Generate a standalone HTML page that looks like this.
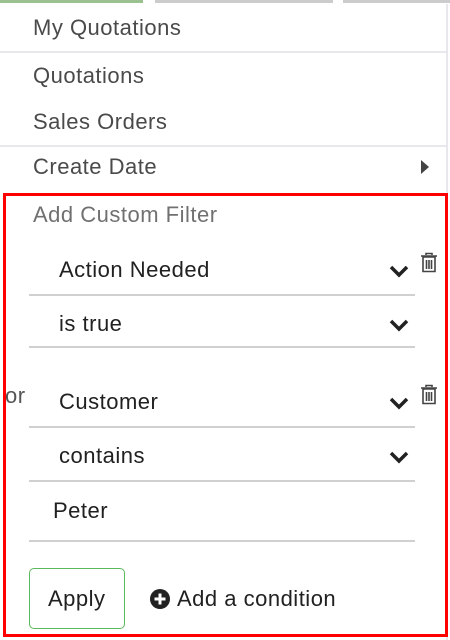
<!DOCTYPE html>
<html><head><style>
body{margin:0;width:450px;height:640px;background:#fff;position:relative;overflow:hidden;font-family:"Liberation Sans",sans-serif;}
.a{position:absolute}
.t{position:absolute;font-size:22px;letter-spacing:0.5px;color:#4a4a4a;line-height:24px;white-space:nowrap}
.d{position:absolute;font-size:22px;letter-spacing:0.5px;color:#212121;line-height:24px;white-space:nowrap}
.hl{position:absolute;height:2px;background:#e8e8ec}
.ul{position:absolute;left:29px;width:386px;height:2px;background:#d0d0d0}
</style></head><body>
<div class="a" style="left:0;top:0;width:143px;height:3px;background:#9ac18f"></div>
<div class="a" style="left:155px;top:0;width:178px;height:3px;background:#ccc"></div>
<div class="a" style="left:343px;top:0;width:107px;height:3px;background:#ccc"></div>
<div class="a" style="left:0;top:4px;width:446px;height:636px;border-right:2px solid #e8e8ec"></div>
<div class="t" style="left:33px;top:16px">My Quotations</div>
<div class="hl" style="left:0;top:51px;width:446px"></div>
<div class="t" style="left:33px;top:64px">Quotations</div>
<div class="t" style="left:33px;top:110px">Sales Orders</div>
<div class="hl" style="left:0;top:145px;width:446px"></div>
<div class="t" style="left:33px;top:155px">Create Date</div>
<svg class="a" style="left:420px;top:159px" width="10" height="16"><path d="M1 1L9 8L1 15Z" fill="#444"/></svg>
<div class="a" style="left:3px;top:193px;width:439px;height:438px;border:3px solid #f00"></div>
<div class="t" style="left:33px;top:203px;color:#707070">Add Custom Filter</div>
<div class="d" style="left:59px;top:258px">Action Needed</div>
<div class="ul" style="top:294px"></div>
<div class="d" style="left:59px;top:312px">is true</div>
<div class="ul" style="top:346px"></div>
<div class="t" style="left:5px;top:384px;color:#555">or</div>
<div class="d" style="left:59px;top:390px">Customer</div>
<div class="ul" style="top:426px"></div>
<div class="d" style="left:59px;top:444px">contains</div>
<div class="ul" style="top:480px"></div>
<div class="d" style="left:53px;top:499px">Peter</div>
<div class="ul" style="top:540px"></div>
<svg class="a" style="left:388px;top:264px" width="22" height="14"><path d="M3 3L11 11L19 3" stroke="#222" stroke-width="3.5" fill="none"/></svg>
<svg class="a" style="left:388px;top:318px" width="22" height="14"><path d="M3 3L11 11L19 3" stroke="#222" stroke-width="3.5" fill="none"/></svg>
<svg class="a" style="left:388px;top:396px" width="22" height="14"><path d="M3 3L11 11L19 3" stroke="#222" stroke-width="3.5" fill="none"/></svg>
<svg class="a" style="left:388px;top:450px" width="22" height="14"><path d="M3 3L11 11L19 3" stroke="#222" stroke-width="3.5" fill="none"/></svg>
<svg class="a" style="left:419px;top:252px" width="20" height="22"><path d="M7 3V1.5H13V3M2 4H18M4 5H16V19.5H4Z M7.5 8V17M10 8V17M12.5 8V17" stroke="#444" stroke-width="1.6" fill="none"/></svg>
<svg class="a" style="left:419px;top:384px" width="20" height="22"><path d="M7 3V1.5H13V3M2 4H18M4 5H16V19.5H4Z M7.5 8V17M10 8V17M12.5 8V17" stroke="#444" stroke-width="1.6" fill="none"/></svg>
<div class="a" style="left:29px;top:568px;width:96px;height:61px;border:1.5px solid #5cb85c;border-radius:5px;box-sizing:border-box"></div>
<div class="d" style="left:48px;top:587px">Apply</div>
<svg class="a" style="left:149px;top:588px" width="22" height="22"><circle cx="11" cy="11" r="10" fill="#222"/><path d="M11 5.5V16.5M5.5 11H16.5" stroke="#fff" stroke-width="3"/></svg>
<div class="d" style="left:177px;top:587px">Add a condition</div>
</body></html>
